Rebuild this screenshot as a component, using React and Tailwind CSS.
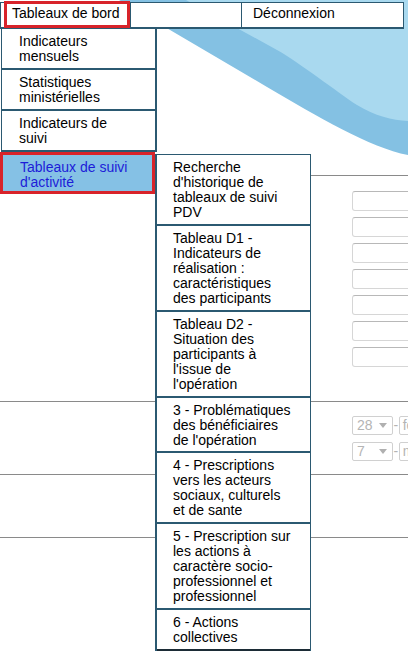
import React from "react";

const border = "border-[#2b5971]";

function MenuItem({ children }) {
  return (
    <div className={`border-l border-r-2 border-b-2 ${border} bg-white pl-[17px] pr-[26px] pt-[5px] pb-[3.85px]`}>
      {children}
    </div>
  );
}

function SubItem({ children, last }) {
  return (
    <div
      className={`border-b-2 ${last ? "border-[#1c2c36]" : border} bg-white pl-[16px] pr-[17px] pt-[5px] pb-[3.85px]`}
    >
      {children}
    </div>
  );
}

function Field() {
  return <div className="h-[20px] w-[100px] shrink-0 rounded-[3px] border border-[#d6d6d6] border-t-[#b8b8b8] bg-white" />;
}

function DateSel({ day, month }) {
  return (
    <div className="flex h-[19px] w-[160px] items-center">
      <div className="flex h-[19px] w-[41px] shrink-0 items-center justify-between rounded-[2px] border border-[#d0d0d0] pl-[4px] pr-[5px] text-[#b4b4b4]">
        <span>{day}</span>
        <svg width="8" height="5" viewBox="0 0 8 5">
          <path d="M0 0h8L4 5z" fill="#b0b0b0" />
        </svg>
      </div>
      <span className="shrink-0 px-[0.5px] text-[#b4b4b4]">-</span>
      <div className="flex h-[19px] w-[70px] shrink-0 items-center rounded-[2px] border border-[#d0d0d0] pl-[3px] text-[#b4b4b4]">
        {month}
      </div>
    </div>
  );
}

export default function App() {
  return (
    <div className="relative h-[655px] w-[408px] overflow-hidden bg-white font-['Liberation_Sans',Arial,sans-serif] text-[14px] leading-[15px] text-black">
      {/* background wave */}
      <svg className="absolute left-0 top-0" width="408" height="200" viewBox="0 0 408 200">
        <path d="M119 0 L267 87 C317 116 370 148 408 155 L408 0 Z" fill="#84c1e3" />
        <path d="M186 0 L277 50 C300 63 337 92 357 105 C375 116 392 120 408 121 L408 0 Z" fill="#a9d9ef" />
      </svg>

      {/* page flow */}
      <div className="relative pt-[2px]">
        <div className={`relative flex h-[27px] w-[404px] border-t border-b-2 border-l ${border}`}>
          <div className={`w-[130px] border-r ${border} bg-white pl-[11px] pt-[3px]`}>Tableaux de bord</div>
          <div className={`w-[111px] border-r ${border} bg-white`} />
          <div className={`w-[162px] border-r ${border} bg-white pl-[11px] pt-[3px]`}>Déconnexion</div>
          <div className="absolute left-[3px] top-[-2px] h-[27px] w-[126px] border-[3px] border-[#d8232a]" />
        </div>

        <div className="mt-[146px] border-t border-[#8a8a8a] pt-[15px] pb-[34px] pl-[352px]">
          <div className="flex flex-col gap-[6px]">
            <Field />
            <Field />
            <Field />
            <Field />
            <Field />
            <Field />
            <Field />
          </div>
        </div>
        <div className="border-t border-[#8a8a8a] pt-[14px] pb-[13px] pl-[352px]">
          <div className="flex flex-col gap-[7px]">
            <DateSel day="28" month="février" />
            <DateSel day="7" month="mars" />
          </div>
        </div>
        <div className="h-[63px] border-t border-[#8a8a8a]" />
        <div className="h-[117px] border-t border-[#8a8a8a]" />
      </div>

      {/* dropdown menu */}
      <div className="absolute left-[1px] top-[29px] w-[156px]">
        <MenuItem>Indicateurs mensuels</MenuItem>
        <MenuItem>Statistiques ministérielles</MenuItem>
        <MenuItem>Indicateurs de suivi</MenuItem>
        <div className="-ml-px w-[155px] border-[3px] border-[#d8232a] bg-[#85c1e5] pl-[17px] pr-[22px] pt-[5px] pb-[1px] text-[#1d1dd8]">
          Tableaux de suivi d'activité
        </div>
      </div>

      {/* submenu */}
      <div className={`absolute left-[155px] top-[154px] w-[156px] border-t border-l-2 border-r ${border}`}>
        <SubItem>Recherche d'historique de tableaux de suivi PDV</SubItem>
        <SubItem>Tableau D1 - Indicateurs de réalisation : caractéristiques des participants</SubItem>
        <SubItem>Tableau D2 - Situation des participants à l'issue de l'opération</SubItem>
        <SubItem>3 - Problématiques des bénéficiaires de l'opération</SubItem>
        <SubItem>4 - Prescriptions vers les acteurs sociaux, culturels et de sante</SubItem>
        <SubItem>5 - Prescription sur les actions à caractère socio-professionnel et professionnel</SubItem>
        <SubItem last>6 - Actions collectives</SubItem>
      </div>
    </div>
  );
}
